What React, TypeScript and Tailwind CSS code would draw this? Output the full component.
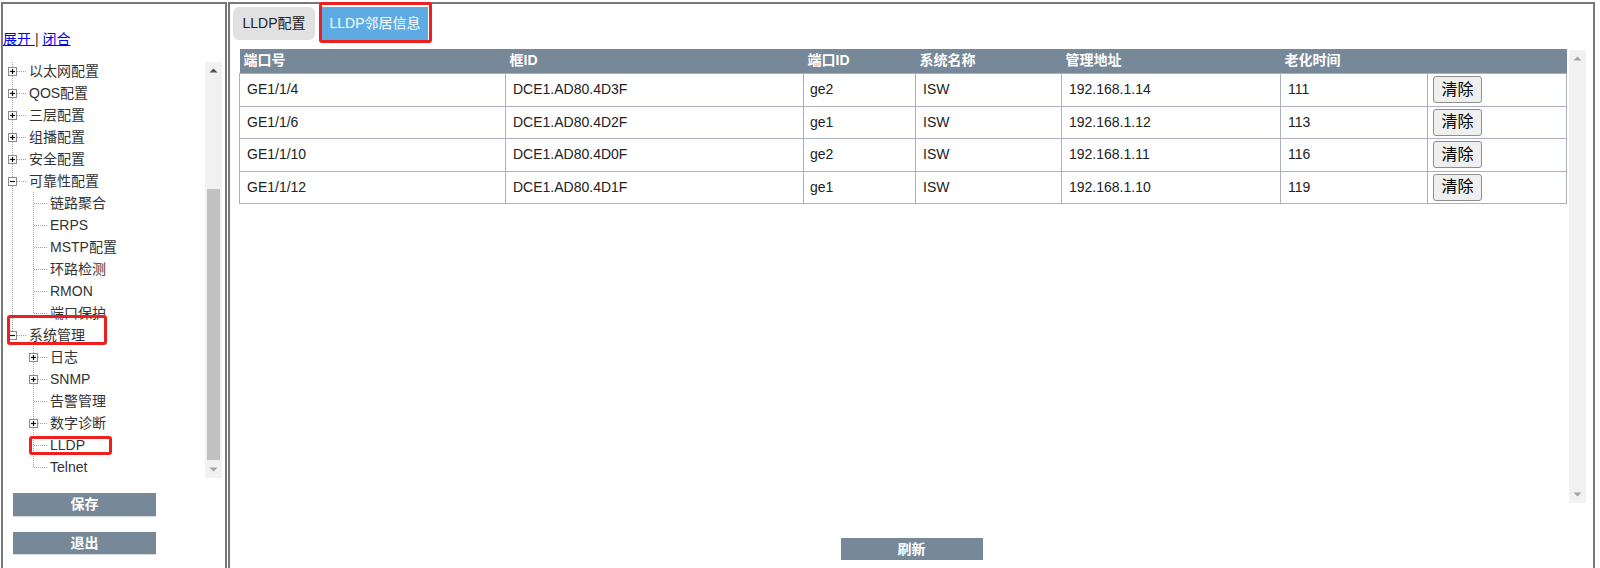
import React from "react";

type TreeNode = {
  label: string;
  level: 0 | 1;
  box?: "+" | "-";
  end?: boolean;
  indent?: boolean;
  mark?: "sys" | "lldp";
};

const tree: TreeNode[] = [
  { label: "以太网配置", level: 0, box: "+" },
  { label: "QOS配置", level: 0, box: "+" },
  { label: "三层配置", level: 0, box: "+" },
  { label: "组播配置", level: 0, box: "+" },
  { label: "安全配置", level: 0, box: "+" },
  { label: "可靠性配置", level: 0, box: "-" },
  { label: "链路聚合", level: 1, indent: true },
  { label: "ERPS", level: 1, indent: true },
  { label: "MSTP配置", level: 1, indent: true },
  { label: "环路检测", level: 1, indent: true },
  { label: "RMON", level: 1, indent: true },
  { label: "端口保护", level: 1, indent: true, end: true },
  { label: "系统管理", level: 0, box: "-", end: true, mark: "sys" },
  { label: "日志", level: 1, box: "+" },
  { label: "SNMP", level: 1, box: "+" },
  { label: "告警管理", level: 1 },
  { label: "数字诊断", level: 1, box: "+" },
  { label: "LLDP", level: 1, mark: "lldp" },
  { label: "Telnet", level: 1, end: true },
];

const rows = [
  { port: "GE1/1/4", chassis: "DCE1.AD80.4D3F", portId: "ge2", sys: "ISW", addr: "192.168.1.14", age: "111" },
  { port: "GE1/1/6", chassis: "DCE1.AD80.4D2F", portId: "ge1", sys: "ISW", addr: "192.168.1.12", age: "113" },
  { port: "GE1/1/10", chassis: "DCE1.AD80.4D0F", portId: "ge2", sys: "ISW", addr: "192.168.1.11", age: "116" },
  { port: "GE1/1/12", chassis: "DCE1.AD80.4D1F", portId: "ge1", sys: "ISW", addr: "192.168.1.10", age: "119" },
];

const DOT = "#a3a3a3";

function Indent({ line }: { line?: boolean }) {
  return (
    <svg width="21" height="22" className="shrink-0">
      {line && <line x1="9.5" y1="0" x2="9.5" y2="22" stroke={DOT} strokeDasharray="1 1" />}
    </svg>
  );
}

function Joint({ end, box }: { end?: boolean; box?: "+" | "-" }) {
  return (
    <svg width="24" height="22" className="shrink-0">
      <line x1="9.5" y1="0" x2="9.5" y2={end ? 11 : 22} stroke={DOT} strokeDasharray="1 1" />
      <line x1={box ? 14 : 10} y1="11.5" x2="24" y2="11.5" stroke={DOT} strokeDasharray="1 1" />
      {box && (
        <>
          <rect x="5.5" y="7.5" width="8" height="8" fill="#fff" stroke="#8a8a8a" />
          <line x1="7" y1="11.5" x2="12" y2="11.5" stroke="#111" strokeWidth="1.2" />
          {box === "+" && <line x1="9.5" y1="9" x2="9.5" y2="14" stroke="#111" strokeWidth="1.2" />}
        </>
      )}
    </svg>
  );
}

function TreeRow({ node }: { node: TreeNode }) {
  return (
    <div className="relative flex h-[22px] shrink-0 items-center">
      {node.level === 1 && <Indent line={node.indent} />}
      <Joint end={node.end} box={node.box} />
      <span className="ml-[2px] whitespace-nowrap text-[14px] leading-[22px] text-[#333]">{node.label}</span>
      {node.mark === "sys" && (
        <span className="absolute left-[4px] top-[-9px] h-[30px] w-[100px] rounded-[3px] border-[3px] border-[#ee1f1f]" />
      )}
      {node.mark === "lldp" && (
        <span className="absolute left-[26px] top-[2px] h-[19px] w-[83px] rounded-[3px] border-[3px] border-[#ee1f1f]" />
      )}
    </div>
  );
}

function Arrow({ up, color }: { up?: boolean; color: string }) {
  return (
    <svg width="17" height="17" className="shrink-0">
      <polygon points={up ? "4.5,10.5 8.5,6.5 12.5,10.5" : "4.5,6.5 8.5,10.5 12.5,6.5"} fill={color} />
    </svg>
  );
}

export default function App() {
  return (
    <div className="flex h-[568px] w-[1600px] overflow-hidden bg-white pl-[1px] pt-[2px] font-['Liberation_Sans','Noto_Sans_CJK_SC',sans-serif]">
      {/* left frame: menu tree */}
      <aside className="flex h-full w-[226px] shrink-0 flex-col border-2 border-b-0 border-[#787878]">
        <div className="mt-[25px] whitespace-pre text-[14px] leading-[20px] text-[#333]">
          <a className="text-[#0000ee] underline" href="#">展开 </a>| <a className="text-[#0000ee] underline" href="#">闭合</a>
        </div>

        <div className="mr-[3px] mt-[13px] flex h-[416px]">
          <div className="flex flex-1 flex-col justify-end overflow-hidden">
            {tree.map((n) => (
              <TreeRow key={n.label} node={n} />
            ))}
          </div>
          <div className="flex w-[17px] flex-col bg-[#f1f1f1]">
            <Arrow up color="#505050" />
            <div className="h-[110px]" />
            <div className="mx-[2px] h-[271px] bg-[#c1c1c1]" />
            <div className="flex-1" />
            <Arrow color="#a3a3a3" />
          </div>
        </div>

        <button className="ml-[10px] mt-[15px] h-[24px] w-[143px] border-b border-[#d6dbe0] bg-[#778899] text-[14px] font-bold text-white">
          保存
        </button>
        <button className="ml-[10px] mt-[15px] h-[23px] w-[143px] border-b border-[#d6dbe0] bg-[#778899] text-[14px] font-bold text-white">
          退出
        </button>
      </aside>

      {/* right frame: LLDP neighbours */}
      <main className="ml-[1px] flex h-full w-[1367px] shrink-0 flex-col border-2 border-b-0 border-[#787878]">
        <div className="ml-[3px] mt-[3px] flex h-[33px] gap-[7px]">
          <div className="flex w-[82px] items-center justify-center rounded-[6px] bg-[#e1e1e1] text-[14px] text-[#222]">
            LLDP配置
          </div>
          <div className="relative flex w-[106px] items-center justify-center bg-[#5eabe3] text-[14px] text-white">
            LLDP邻居信息
            <span className="absolute left-[-3px] top-[-5px] h-[41px] w-[113px] rounded-[3px] border-[3px] border-[#ee1f1f]" />
          </div>
        </div>

        <div className="ml-[9px] mr-[8px] mt-[9px] flex h-[454px] gap-[2px]">
          <div className="flex-1">
            <table className="w-full table-fixed border-collapse text-[14px] text-[#222]">
              <colgroup>
                <col className="w-[266px]" />
                <col className="w-[298px]" />
                <col className="w-[112px]" />
                <col className="w-[146px]" />
                <col className="w-[219px]" />
                <col className="w-[147px]" />
                <col className="w-[139px]" />
              </colgroup>
              <thead>
                <tr className="h-[24px] bg-[#778899] text-left text-white">
                  <th className="pl-[4px] font-bold">端口号</th>
                  <th className="pl-[4px] font-bold">框ID</th>
                  <th className="pl-[4px] font-bold">端口ID</th>
                  <th className="pl-[4px] font-bold">系统名称</th>
                  <th className="pl-[4px] font-bold">管理地址</th>
                  <th className="pl-[4px] font-bold">老化时间</th>
                  <th />
                </tr>
              </thead>
              <tbody>
                {rows.map((r, i) => (
                  <tr key={r.port} className={i % 2 === 0 ? "h-[33px]" : "h-[32px]"}>
                    <td className="border border-[#a9b1be] pl-[7px]">{r.port}</td>
                    <td className="border border-[#a9b1be] pl-[7px]">{r.chassis}</td>
                    <td className="border border-[#a9b1be] pl-[6px]">{r.portId}</td>
                    <td className="border border-[#a9b1be] pl-[7px]">{r.sys}</td>
                    <td className="border border-[#a9b1be] pl-[7px]">{r.addr}</td>
                    <td className="border border-[#a9b1be] pl-[7px]">{r.age}</td>
                    <td className="border border-[#a9b1be] pl-[5px]">
                      <button className="flex h-[27px] w-[49px] items-center justify-center rounded-[3px] border border-[#8f8f8f] bg-[#efefef] text-[16px] text-black">
                        清除
                      </button>
                    </td>
                  </tr>
                ))}
              </tbody>
            </table>
          </div>
          <div className="mt-[1px] flex w-[17px] flex-col justify-between bg-[#f1f1f1]">
            <Arrow up color="#a3a3a3" />
            <Arrow color="#a3a3a3" />
          </div>
        </div>

        <button className="mt-[35px] h-[22px] w-[142px] self-center bg-[#778899] text-[14px] font-bold text-white">
          刷新
        </button>
      </main>
    </div>
  );
}
